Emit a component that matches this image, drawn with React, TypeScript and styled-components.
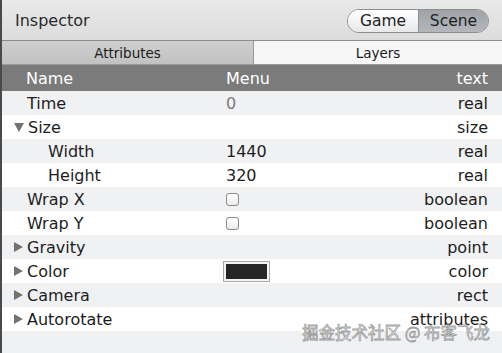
import styled, { createGlobalStyle } from "styled-components";

const GlobalStyle = createGlobalStyle`
  html, body {
    margin: 0;
    padding: 0;
    background: #f0f1f3;
  }
  * {
    box-sizing: border-box;
  }
`;

const Panel = styled.div`
  position: relative;
  width: 502px;
  height: 353px;
  overflow: hidden;
  border-left: 2px solid #4a4a4a;
  font-family: "DejaVu Sans", "Liberation Sans", sans-serif;
  color: #1d1d1d;
  background: #f0f1f3;
`;

const TitleBar = styled.div`
  height: 41px;
  display: flex;
  align-items: center;
  justify-content: space-between;
  padding: 0 13px 0 13px;
  background: linear-gradient(#e9e9e9, #dcdcdc);
  border-bottom: 1px solid #8d8d8d;
`;

const Title = styled.div`
  font-size: 16px;
  color: #2a2a2a;
`;

const Segmented = styled.div`
  display: flex;
  height: 24px;
  border: 1px solid #8e8e8e;
  border-radius: 12px;
  overflow: hidden;
  margin-top: 2px;
`;

const Segment = styled.div<{ $active?: boolean }>`
  width: 70px;
  display: flex;
  align-items: center;
  justify-content: center;
  font-size: 15.5px;
  color: #1e1e1e;
  background: ${(p) =>
    p.$active
      ? "linear-gradient(#9fa3a8, #b3b7bb)"
      : "linear-gradient(#ffffff, #e8e8e8)"};
  border-left: ${(p) => (p.$active ? "1px solid #8e8e8e" : "none")};
`;

const Tabs = styled.div`
  display: grid;
  grid-template-columns: 251px 1fr;
  height: 24px;
  border-bottom: 1px solid #9a9a9a;
`;

const Tab = styled.div<{ $selected?: boolean }>`
  display: flex;
  align-items: center;
  justify-content: center;
  font-size: 13.5px;
  color: #1a1a1a;
  background: ${(p) =>
    p.$selected ? "linear-gradient(#cfcfcf, #c2c2c2)" : "#f7f7f7"};
  border-left: ${(p) => (p.$selected ? "none" : "1px solid #9a9a9a")};
`;

const Row = styled.div<{ $stripe?: boolean; $header?: boolean }>`
  display: grid;
  grid-template-columns: 224px 1fr auto;
  align-items: center;
  height: ${(p) => (p.$header ? 26 : 24)}px;
  padding-right: 14px;
  font-size: 16px;
  background: ${(p) => (p.$header ? "#7b7b7b" : p.$stripe ? "#f0f1f3" : "#ffffff")};
  color: ${(p) => (p.$header ? "#ffffff" : "#1d1d1d")};
`;

const NameCell = styled.div<{ $indent: number }>`
  display: flex;
  align-items: center;
  padding-left: ${(p) => p.$indent}px;
`;

const Disclosure = styled.span<{ $open?: boolean }>`
  width: 0;
  height: 0;
  margin-left: -13px;
  margin-right: 4px;
  border-style: solid;
  ${(p) =>
    p.$open
      ? "border-width: 9px 5px 0 5px; border-color: #727272 transparent transparent transparent;"
      : "border-width: 5px 0 5px 9px; border-color: transparent transparent transparent #727272;"}
`;

const ValueCell = styled.div<{ $muted?: boolean }>`
  display: flex;
  align-items: center;
  color: ${(p) => (p.$muted ? "#7a7a7a" : "inherit")};
`;

const TypeCell = styled.div`
  text-align: right;
`;

const Checkbox = styled.span`
  width: 13px;
  height: 13px;
  border: 1px solid #8a8a8a;
  border-radius: 3px;
  background: linear-gradient(#ffffff, #ececec);
`;

const Swatch = styled.span`
  width: 47px;
  height: 21px;
  margin-left: -3px;
  padding: 2px;
  border: 1px solid #a8a8a8;
  background: #f4f4f4;
  display: flex;
  span {
    flex: 1;
    background: #262626;
  }
`;

const Filler = styled.div`
  height: 24px;
  background: #f0f1f3;
`;

const Watermark = styled.div`
  position: absolute;
  right: 12px;
  bottom: 9px;
  font-family: "Noto Sans CJK SC", "DejaVu Sans", sans-serif;
  font-size: 16.5px;
  color: rgba(255, 255, 255, 0.55);
  -webkit-text-stroke: 0.8px rgba(90, 90, 90, 0.6);
`;

type Item = {
  name: string;
  value?: string;
  kind?: "check" | "color";
  type: string;
  indent?: number;
  toggle?: "open" | "closed";
  muted?: boolean;
};

const items: Item[] = [
  { name: "Time", value: "0", type: "real", muted: true },
  { name: "Size", type: "size", toggle: "open" },
  { name: "Width", value: "1440", type: "real", indent: 46 },
  { name: "Height", value: "320", type: "real", indent: 46 },
  { name: "Wrap X", kind: "check", type: "boolean" },
  { name: "Wrap Y", kind: "check", type: "boolean" },
  { name: "Gravity", type: "point", toggle: "closed" },
  { name: "Color", kind: "color", type: "color", toggle: "closed" },
  { name: "Camera", type: "rect", toggle: "closed" },
  { name: "Autorotate", type: "attributes", toggle: "closed" },
];

const App = () => {
  return (
    <>
      <GlobalStyle />
      <Panel>
        <TitleBar>
          <Title>Inspector</Title>
          <Segmented>
            <Segment>Game</Segment>
            <Segment $active>Scene</Segment>
          </Segmented>
        </TitleBar>
        <Tabs>
          <Tab $selected>Attributes</Tab>
          <Tab>Layers</Tab>
        </Tabs>
        <Row $header>
          <NameCell $indent={24}>Name</NameCell>
          <ValueCell>Menu</ValueCell>
          <TypeCell>text</TypeCell>
        </Row>
        {items.map((item, i) => (
          <Row key={item.name} $stripe={i % 2 === 0}>
            <NameCell $indent={item.indent ?? 25}>
              {item.toggle && <Disclosure $open={item.toggle === "open"} />}
              {item.name}
            </NameCell>
            <ValueCell $muted={item.muted}>
              {item.value}
              {item.kind === "check" && <Checkbox />}
              {item.kind === "color" && (
                <Swatch>
                  <span />
                </Swatch>
              )}
            </ValueCell>
            <TypeCell>{item.type}</TypeCell>
          </Row>
        ))}
        <Filler />
        <Watermark>掘金技术社区 @ 布客飞龙</Watermark>
      </Panel>
    </>
  );
};

export default App;
